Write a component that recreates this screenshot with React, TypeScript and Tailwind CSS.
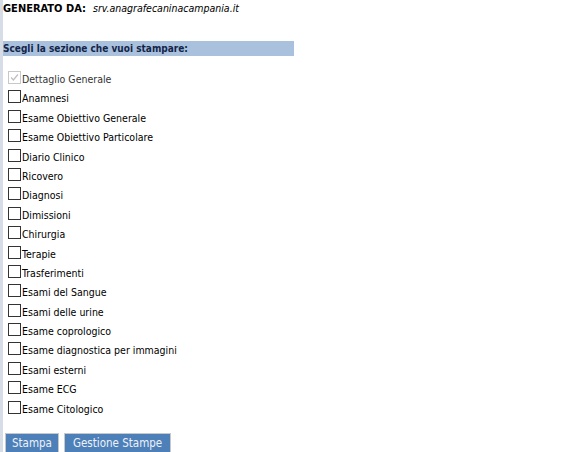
const SECTIONS = [
  'Anamnesi',
  'Esame Obiettivo Generale',
  'Esame Obiettivo Particolare',
  'Diario Clinico',
  'Ricovero',
  'Diagnosi',
  'Dimissioni',
  'Chirurgia',
  'Terapie',
  'Trasferimenti',
  'Esami del Sangue',
  'Esami delle urine',
  'Esame coprologico',
  'Esame diagnostica per immagini',
  'Esami esterni',
  'Esame ECG',
  'Esame Citologico',
]

function Box({ checked, disabled }: { checked?: boolean; disabled?: boolean }) {
  return (
    <span
      className={`flex h-[13px] w-[13px] shrink-0 items-center justify-center border bg-white ${
        disabled ? 'border-[#c8c8c8]' : 'border-[#333]'
      }`}
    >
      {checked && (
        <svg viewBox="0 0 13 13" className="h-[13px] w-[13px]">
          <path d="M2.5 6.5 L5.2 9.3 L10.5 3" fill="none" stroke="#c0c0c0" strokeWidth="1.6" />
        </svg>
      )}
    </span>
  )
}

export default function App() {
  return (
    <div
      className="flex min-h-[452px] w-[587px] bg-white text-[10.5px] text-black"
      style={{ fontFamily: '"DejaVu Sans Condensed", "DejaVu Sans", sans-serif' }}
    >
      <div className="w-[3px] shrink-0 bg-[#d6dde6]" />
      <div className="flex flex-col pt-[1px]">
        <div className="flex h-[15px] items-center gap-[7px] leading-[15px]">
          <span className="text-[11px] font-bold">GENERATO DA:</span>
          <em className="text-[10.5px]">srv.anagrafecaninacampania.it</em>
        </div>

        <div className="mt-[25px] h-[15px] w-[291px] bg-[#a9c1dc] text-[10px] leading-[15px] font-bold text-[#14254a]">
          Scegli la sezione che vuoi stampare:
        </div>

        <div className="mt-[15px] flex flex-col gap-[6.4px] pl-[5px]">
          <label className="flex h-[13px] items-end gap-[1px]">
            <Box checked disabled />
            <span className="relative top-[2px] leading-[13px] text-[#333]">Dettaglio Generale</span>
          </label>
          {SECTIONS.map((s) => (
            <label key={s} className="flex h-[13px] items-end gap-[1px]">
              <Box />
              <span className="relative top-[2px] leading-[13px]">{s}</span>
            </label>
          ))}
        </div>

        <div className="mt-[19px] flex gap-[5px] pl-[2px]">
          <button className="h-[22px] border border-[#c8c8c8] bg-[#4d7fb8] px-[6px] text-[11.5px] text-[#eef2f8]">
            Stampa
          </button>
          <button className="h-[22px] border border-[#c8c8c8] bg-[#4d7fb8] px-[8px] text-[11.5px] text-[#eef2f8]">
            Gestione Stampe
          </button>
        </div>
      </div>
    </div>
  )
}
